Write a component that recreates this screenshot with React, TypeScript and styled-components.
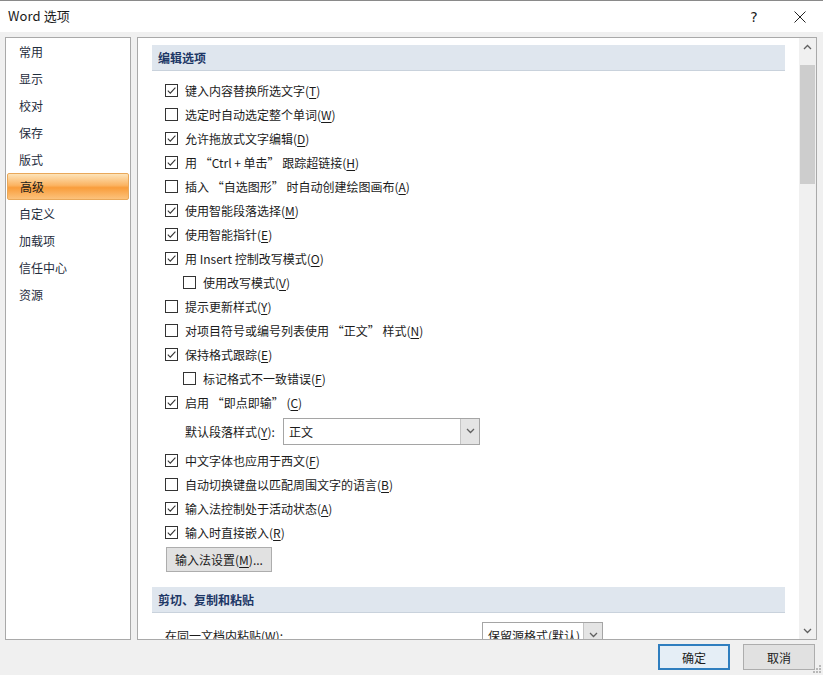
import React from "react";
import styled, { createGlobalStyle, css } from "styled-components";

const GlobalStyle = createGlobalStyle`
  html, body { margin: 0; padding: 0; background: #f0f0f0; }
  body {
    font-family: "Noto Sans CJK SC", "Noto Sans", sans-serif;
    font-size: 12px;
    color: #1b1b1b;
  }
  * { box-sizing: border-box; }
`;

const Window = styled.div`
  position: relative;
  width: 823px;
  height: 675px;
  display: flex;
  flex-direction: column;
  background: #f0f0f0;
  overflow: hidden;
`;

const TitleBar = styled.div`
  height: 32px;
  flex: none;
  display: flex;
  align-items: center;
  background: #ffffff;
  border-top: 1px solid #8a8a8a;
  padding-left: 8px;
`;

const Title = styled.div`
  flex: 1;
  font-size: 13px;
  color: #1a1a1a;
  letter-spacing: 0.1px;
  margin-top: -2px;
`;

const TitleButton = styled.div<{ $w: number }>`
  width: ${(p) => p.$w}px;
  height: 31px;
  display: flex;
  align-items: center;
  justify-content: center;
  font-family: "DejaVu Sans", sans-serif;
  font-size: 14px;
  color: #1a1a1a;
`;

const Body = styled.div`
  height: 608px;
  flex: none;
  display: flex;
  gap: 6px;
  padding: 5px 6px 0 5px;
`;

const NavPanel = styled.div`
  width: 126px;
  flex: none;
  height: 603px;
  background: #ffffff;
  border: 1px solid #a9a9a9;
  padding-top: 0;
  display: flex;
  flex-direction: column;
`;

const NavItem = styled.div<{ $active?: boolean }>`
  height: 27px;
  display: flex;
  align-items: center;
  padding-left: 13px;
  color: #1f2d3d;
  ${(p) =>
    p.$active &&
    css`
      margin: 0 1px;
      padding-left: 12px;
      color: #1a1a1a;
      border: 1px solid #e9a85a;
      border-radius: 2px;
      background: linear-gradient(
        to bottom,
        #fde3b8 0%,
        #fbb463 45%,
        #f99d3b 55%,
        #fcc27c 100%
      );
    `}
`;

const ContentPanel = styled.div`
  flex: 1;
  height: 603px;
  background: #ffffff;
  border: 1px solid #a9a9a9;
  display: flex;
  overflow: hidden;
`;

const ScrollArea = styled.div`
  flex: 1;
  overflow: hidden;
  padding: 7px 14px 0 14px;
`;

const SectionHeader = styled.div<{ $top?: number }>`
  height: 26px;
  display: flex;
  align-items: center;
  padding-left: 6px;
  margin-top: ${(p) => p.$top ?? 0}px;
  background: #dfe6ee;
  border-bottom: 1px solid #c9d2dc;
  font-weight: bold;
  color: #1d3766;
`;

const Rows = styled.div`
  display: flex;
  flex-direction: column;
  padding-top: 7px;
`;

const Row = styled.div<{ $indent?: boolean }>`
  height: 24px;
  display: flex;
  align-items: center;
  gap: 7px;
  padding-left: ${(p) => (p.$indent ? 31 : 13)}px;
`;

const Box = styled.span`
  width: 13px;
  height: 13px;
  flex: none;
  border: 1px solid #333333;
  background: #ffffff;
  display: flex;
  align-items: center;
  justify-content: center;
`;

const Key = styled.span`
  text-decoration: underline;
  text-underline-offset: 2px;
`;

const SelectRow = styled.div`
  height: 34px;
  display: flex;
  align-items: center;
  padding-left: 33px;
`;

const SelectLabel = styled.span<{ $w: number }>`
  width: ${(p) => p.$w}px;
  flex: none;
`;

const Select = styled.div<{ $w: number; $h: number }>`
  width: ${(p) => p.$w}px;
  height: ${(p) => p.$h}px;
  display: flex;
  align-items: stretch;
  border: 1px solid #a5a5a5;
  background: #ffffff;
`;

const SelectValue = styled.div`
  flex: 1;
  display: flex;
  align-items: center;
  padding-left: 5px;
  white-space: nowrap;
  overflow: hidden;
`;

const SelectArrow = styled.div`
  width: 19px;
  flex: none;
  display: flex;
  align-items: center;
  justify-content: center;
  background: #e4e4e4;
  border-left: 1px solid #c4c4c4;
`;

const PlainButton = styled.div`
  margin: 3px 0 0 14px;
  width: 106px;
  height: 25px;
  display: flex;
  align-items: center;
  justify-content: center;
  background: #e1e1e1;
  border: 1px solid #adadad;
`;

const PasteRow = styled.div`
  margin-top: 9px;
  height: 26px;
  display: flex;
  align-items: center;
  padding-left: 13px;
`;

const ScrollBar = styled.div`
  width: 17px;
  flex: none;
  background: #f0f0f0;
  display: flex;
  flex-direction: column;
  align-items: center;
`;

const ScrollArrow = styled.div`
  height: 17px;
  width: 17px;
  flex: none;
  display: flex;
  align-items: center;
  justify-content: center;
`;

const Thumb = styled.div`
  width: 15px;
  height: 119px;
  margin-top: 10px;
  background: #cdcdcd;
  flex: none;
`;

const Spacer = styled.div`
  flex: 1;
`;

const Footer = styled.div`
  flex: 1;
  display: flex;
  justify-content: flex-end;
  align-items: flex-start;
  gap: 13px;
  padding: 4px 8px 0 0;
`;

const DialogButton = styled.div<{ $primary?: boolean }>`
  width: 72px;
  height: 26px;
  display: flex;
  align-items: center;
  justify-content: center;
  background: #e1e1e1;
  border: 1px solid ${(p) => (p.$primary ? "#2f7ebf" : "#adadad")};
  ${(p) =>
    p.$primary &&
    css`
      box-shadow: inset 0 0 0 1px #2f7ebf;
      background: #e5eef6;
    `}
`;

const Grip = styled.svg`
  position: absolute;
  right: 1px;
  bottom: 1px;
`;

const Check = () => (
  <svg width="11" height="11" viewBox="0 0 11 11">
    <path d="M1.8 5.6 L4.3 8.1 L9.4 2.6" fill="none" stroke="#333" strokeWidth="1.1" />
  </svg>
);

const Chevron = ({ up }: { up?: boolean }) => (
  <svg width="9" height="6" viewBox="0 0 9 6">
    <path
      d={up ? "M1 5 L4.5 1.5 L8 5" : "M1 1 L4.5 4.5 L8 1"}
      fill="none"
      stroke="#606060"
      strokeWidth="1.3"
    />
  </svg>
);

const Label = ({ text }: { text: string }) => {
  const i = text.indexOf("&");
  if (i < 0) return <span>{text}</span>;
  return (
    <span>
      {text.slice(0, i)}
      <Key>{text[i + 1]}</Key>
      {text.slice(i + 2)}
    </span>
  );
};

type Opt = { t: string; c: boolean; ind?: boolean };

const first: Opt[] = [
  { t: "键入内容替换所选文字(&T)", c: true },
  { t: "选定时自动选定整个单词(&W)", c: false },
  { t: "允许拖放式文字编辑(&D)", c: true },
  { t: "用 “Ctrl + 单击” 跟踪超链接(&H)", c: true },
  { t: "插入 “自选图形” 时自动创建绘图画布(&A)", c: false },
  { t: "使用智能段落选择(&M)", c: true },
  { t: "使用智能指针(&E)", c: true },
  { t: "用 Insert 控制改写模式(&O)", c: true },
  { t: "使用改写模式(&V)", c: false, ind: true },
  { t: "提示更新样式(&Y)", c: false },
  { t: "对项目符号或编号列表使用 “正文” 样式(&N)", c: false },
  { t: "保持格式跟踪(&E)", c: true },
  { t: "标记格式不一致错误(&F)", c: false, ind: true },
  { t: "启用 “即点即输” (&C)", c: true },
];

const second: Opt[] = [
  { t: "中文字体也应用于西文(&F)", c: true },
  { t: "自动切换键盘以匹配周围文字的语言(&B)", c: false },
  { t: "输入法控制处于活动状态(&A)", c: true },
  { t: "输入时直接嵌入(&R)", c: true },
];

const nav = ["常用", "显示", "校对", "保存", "版式", "高级", "自定义", "加载项", "信任中心", "资源"];

const OptionRow = ({ o }: { o: Opt }) => (
  <Row $indent={o.ind}>
    <Box>{o.c && <Check />}</Box>
    <Label text={o.t} />
  </Row>
);

export default function App() {
  return (
    <>
      <GlobalStyle />
      <Window>
        <TitleBar>
          <Title>Word 选项</Title>
          <TitleButton $w={46}>?</TitleButton>
          <TitleButton $w={46}>
            <svg width="12" height="12" viewBox="0 0 12 12">
              <path d="M0.5 0.5 L11.5 11.5 M11.5 0.5 L0.5 11.5" stroke="#222" strokeWidth="1" />
            </svg>
          </TitleButton>
        </TitleBar>
        <Body>
          <NavPanel>
            {nav.map((n) => (
              <NavItem key={n} $active={n === "高级"}>
                {n}
              </NavItem>
            ))}
          </NavPanel>
          <ContentPanel>
            <ScrollArea>
              <SectionHeader>编辑选项</SectionHeader>
              <Rows>
                {first.map((o, i) => (
                  <OptionRow key={i} o={o} />
                ))}
                <SelectRow>
                  <SelectLabel $w={98}>
                    <Label text="默认段落样式(&Y):" />
                  </SelectLabel>
                  <Select $w={197} $h={27}>
                    <SelectValue>正文</SelectValue>
                    <SelectArrow>
                      <Chevron />
                    </SelectArrow>
                  </Select>
                </SelectRow>
                {second.map((o, i) => (
                  <OptionRow key={i} o={o} />
                ))}
              </Rows>
              <PlainButton>
                <Label text="输入法设置(&M)..." />
              </PlainButton>
              <SectionHeader $top={15}>剪切、复制和粘贴</SectionHeader>
              <PasteRow>
                <SelectLabel $w={317}>
                  <Label text="在同一文档内粘贴(&W):" />
                </SelectLabel>
                <Select $w={121} $h={26}>
                  <SelectValue>保留源格式(默认)</SelectValue>
                  <SelectArrow>
                    <Chevron />
                  </SelectArrow>
                </Select>
              </PasteRow>
            </ScrollArea>
            <ScrollBar>
              <ScrollArrow>
                <Chevron up />
              </ScrollArrow>
              <Thumb />
              <Spacer />
              <ScrollArrow>
                <Chevron />
              </ScrollArrow>
            </ScrollBar>
          </ContentPanel>
        </Body>
        <Footer>
          <DialogButton $primary>确定</DialogButton>
          <DialogButton>取消</DialogButton>
        </Footer>
        <Grip width="10" height="10" viewBox="0 0 10 10">
          <rect x="7" y="1" width="2" height="2" fill="#b8b8b8" />
          <rect x="4" y="4" width="2" height="2" fill="#b8b8b8" />
          <rect x="7" y="4" width="2" height="2" fill="#b8b8b8" />
          <rect x="1" y="7" width="2" height="2" fill="#b8b8b8" />
          <rect x="4" y="7" width="2" height="2" fill="#b8b8b8" />
          <rect x="7" y="7" width="2" height="2" fill="#b8b8b8" />
        </Grip>
      </Window>
    </>
  );
}
